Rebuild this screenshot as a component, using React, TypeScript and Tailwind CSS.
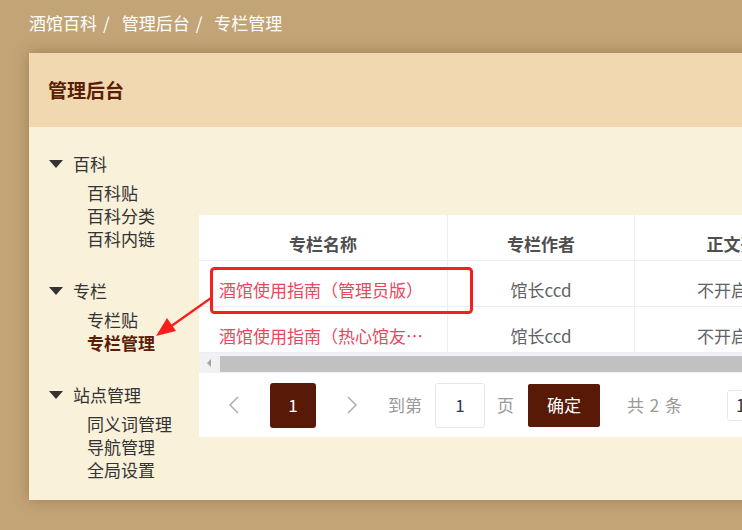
import { ReactNode } from 'react'

const groups = [
  { title: '百科', items: ['百科贴', '百科分类', '百科内链'] },
  { title: '专栏', items: ['专栏贴', '专栏管理'] },
  { title: '站点管理', items: ['同义词管理', '导航管理', '全局设置'] },
]

const rows = [
  { name: '酒馆使用指南（管理员版）', author: '馆长ccd', body: '不开启' },
  { name: '酒馆使用指南（热心馆友版）', author: '馆长ccd', body: '不开启' },
]

function Chevron({ dir }: { dir: 'left' | 'right' }) {
  return (
    <svg width="10" height="18" viewBox="0 0 10 18" className="shrink-0">
      <path
        d={dir === 'left' ? 'M9 1 L1 9 L9 17' : 'M1 1 L9 9 L1 17'}
        fill="none"
        stroke="#a9adb6"
        strokeWidth="1.5"
      />
    </svg>
  )
}

// table cell: text sits a little below the middle, like the original's padding
function Cell({ w, children, className = '' }: { w: string; children: ReactNode; className?: string }) {
  return (
    <div className={`${w} shrink-0 border-r border-[#ebeef5] flex items-start pt-[17px] leading-[23px] overflow-hidden ${className}`}>
      {children}
    </div>
  )
}

export default function App() {
  return (
    <div className="relative h-[530px] w-[742px] overflow-hidden bg-[#c3a477] font-['Noto_Sans_CJK_SC',sans-serif]">
      {/* Breadcrumb */}
      <div className="flex h-[46px] items-center pl-[29px] text-[17px] text-white">
        <span>酒馆百科</span>
        <span className="ml-[6px] mr-[12px]">/</span>
        <span>管理后台</span>
        <span className="ml-[6px] mr-[12px]">/</span>
        <span>专栏管理</span>
      </div>

      {/* Card */}
      <div className="ml-[29px] mt-[7px] w-[780px] shadow-[0_0_14px_rgba(90,55,15,0.35)]">
        <div className="flex h-[74px] items-center bg-[#f2d8b0] pl-[19px] text-[19px] font-bold text-[#5a1d08]">
          管理后台
        </div>

        <div className="flex h-[373px] bg-[#faf1db]">
          {/* Sidebar */}
          <div className="w-[170px] shrink-0 pl-[20px] pt-[25px] text-[17px] leading-[23px] text-[#333]">
            {groups.map((g, gi) => (
              <div key={g.title} className={gi > 0 ? 'mt-[29px]' : ''}>
                <div className="flex items-center">
                  <svg width="14" height="8" viewBox="0 0 14 8">
                    <polygon points="0,0 14,0 7,8" fill="#333" />
                  </svg>
                  <span className="ml-[10px]">{g.title}</span>
                </div>
                <div className="ml-[38px] mt-[6px]">
                  {g.items.map((it) => (
                    <div
                      key={it}
                      className={it === '专栏管理' ? 'font-bold text-[#5a1d08]' : ''}
                    >
                      {it}
                    </div>
                  ))}
                </div>
              </div>
            ))}
          </div>

          {/* Table */}
          <div className="mt-[88px] h-[222px] flex-1 overflow-hidden bg-white">
            <div className="flex h-[46px] border-b border-[#ebeef5] text-[17px] font-bold text-[#4f4f4f]">
              <Cell w="w-[249px]" className="justify-center">专栏名称</Cell>
              <Cell w="w-[187px]" className="justify-center">专栏作者</Cell>
              <Cell w="w-[212px]" className="justify-center whitespace-nowrap">正文开启</Cell>
            </div>
            {rows.map((r) => (
              <div key={r.name} className="flex h-[46px] border-b border-[#ebeef5] text-[17px] text-[#5f6266]">
                <Cell w="w-[249px]" className="pl-[20px] pr-[16px]">
                  <span className="truncate text-[#e8475d]">{r.name}</span>
                </Cell>
                <Cell w="w-[187px]" className="justify-center">{r.author}</Cell>
                <Cell w="w-[212px]" className="pl-[62px] whitespace-nowrap">{r.body}</Cell>
              </div>
            ))}

            {/* Horizontal scrollbar */}
            <div className="flex h-[20px] items-start bg-[#f1f1f1]">
              <svg width="4" height="8" viewBox="0 0 4 8" className="ml-[8px] mt-[6px] shrink-0">
                <polygon points="4,0 4,8 0,4" fill="#a3a3a3" />
              </svg>
              <div className="ml-[9px] mt-[3px] h-[16px] flex-1 bg-[#c1c1c1]" />
            </div>

            {/* Pagination */}
            <div className="flex h-[64px] items-center pl-[30px] text-[17px] text-[#9a9a9a] whitespace-nowrap">
              <Chevron dir="left" />
              <div className="ml-[31px] flex h-[45px] w-[46px] shrink-0 items-center justify-center rounded-[3px] bg-[#581a06] text-white">
                1
              </div>
              <div className="ml-[31px]">
                <Chevron dir="right" />
              </div>
              <span className="ml-[31px]">到第</span>
              <div className="ml-[13px] flex h-[45px] w-[50px] shrink-0 items-center justify-center rounded-[3px] border border-[#e4e7ed] text-[#2b3a55]">
                1
              </div>
              <span className="ml-[12px]">页</span>
              <div className="ml-[14px] flex h-[43px] w-[72px] shrink-0 items-center justify-center rounded-[2px] bg-[#581a06] text-white">
                确定
              </div>
              <span className="ml-[27px] tracking-[1px]">共 2 条</span>
              <div className="ml-[44px] flex h-[31px] w-[90px] shrink-0 items-center rounded-[3px] border border-[#e4e7ed] pl-[8px] text-[#333]">
                10条/页
              </div>
            </div>
          </div>
        </div>
      </div>

      {/* Annotation: red box + arrow */}
      <svg className="pointer-events-none absolute left-0 top-0" width="742" height="530">
        <rect x="211.5" y="268.5" width="260" height="44" rx="3" fill="none" stroke="#f5201d" strokeWidth="3" />
        <line x1="211" y1="298" x2="170" y2="327" stroke="#f5201d" strokeWidth="2.2" />
        <polygon points="156,336 176,331 167,318" fill="#f5201d" />
      </svg>
    </div>
  )
}
